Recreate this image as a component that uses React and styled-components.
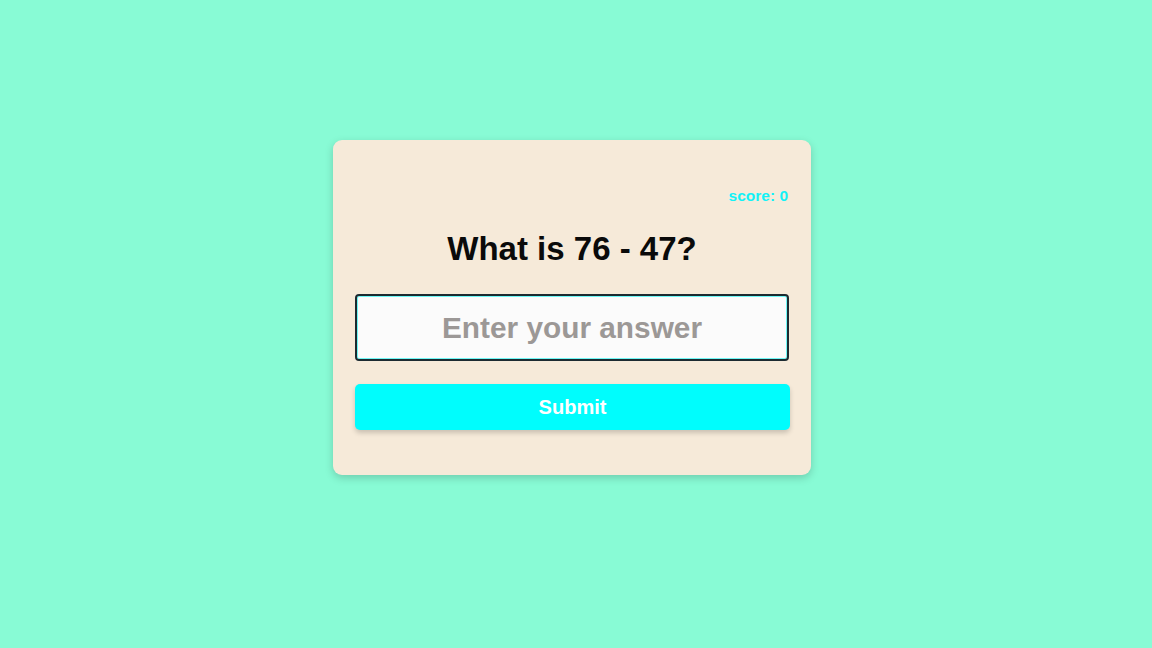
import React from "react";
import styled, { createGlobalStyle } from "styled-components";

const Global = createGlobalStyle`
  html, body { margin: 0; padding: 0; background: #88fbd5; }
  body { font-family: "Liberation Sans", Arial, sans-serif; }
  * { box-sizing: border-box; }
`;

const Page = styled.div`
  min-height: 648px;
  display: flex;
  justify-content: center;
  align-items: flex-start;
  padding: 140px 8px 0 0;
`;

const Card = styled.div`
  width: 478px;
  background: #f6ead9;
  border-radius: 9px;
  box-shadow: 0 3px 8px rgba(0, 0, 0, 0.18);
  padding: 46px 22px 45px;
  display: flex;
  flex-direction: column;
`;

const Score = styled.div`
  align-self: flex-end;
  margin-right: 1px;
  color: #12f2f7;
  font-weight: 700;
  font-size: 15.5px;
  line-height: 20px;
`;

const Question = styled.h1`
  margin: 23px 0 0;
  text-align: center;
  font-size: 33px;
  line-height: 40px;
  font-weight: 700;
  color: #0a0a0a;
`;

const AnswerInput = styled.input`
  margin-top: 25px;
  width: 434px;
  height: 67px;
  border: 2px solid #1c2a30;
  border-radius: 4px;
  background: #fbfbfb;
  box-shadow: inset 0 0 0 1px #6ff7f5;
  text-align: center;
  font-family: "Liberation Sans", Arial, sans-serif;
  font-weight: 700;
  font-size: 29.8px;
  color: #222;
  outline: none;
  &::placeholder { color: #9c9896; }
`;

const SubmitButton = styled.button`
  margin-top: 23px;
  width: 435px;
  height: 46px;
  border: none;
  border-radius: 5px;
  background: #00fdfd;
  box-shadow: 0 3px 5px rgba(0, 0, 0, 0.18);
  color: #ffffff;
  font-family: "Liberation Sans", Arial, sans-serif;
  font-weight: 700;
  font-size: 20px;
  cursor: pointer;
`;

export default function App() {
  return (
    <>
      <Global />
      <Page>
        <Card>
          <Score>score: 0</Score>
          <Question>What is 76 - 47?</Question>
          <AnswerInput placeholder="Enter your answer" />
          <SubmitButton>Submit</SubmitButton>
        </Card>
      </Page>
    </>
  );
}
